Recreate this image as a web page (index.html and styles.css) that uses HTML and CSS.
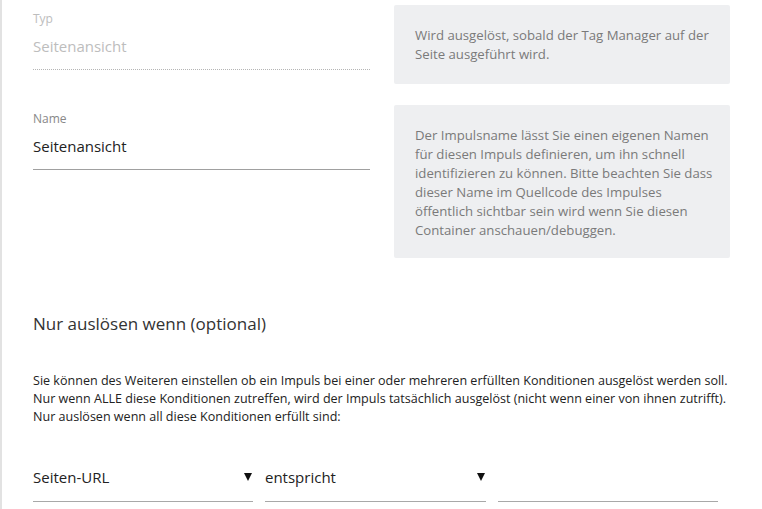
FILE: index.html
```html
<!DOCTYPE html>
<html lang="de">
<head>
  <meta charset="UTF-8" />
  <meta name="viewport" content="width=device-width, initial-scale=1.0"/>
  <title>Impuls bearbeiten</title>
  <link rel="stylesheet" href="styles.css">
</head>
<body>
  <main class="editor">
    <section class="field-row">
      <div class="field field-readonly">
        <label class="field-label">Typ</label>
        <div class="field-value">Seitenansicht</div>
      </div>
      <div class="hint-box">
        Wird ausgelöst, sobald der Tag Manager auf der Seite ausgeführt wird.
      </div>
    </section>

    <section class="field-row">
      <div class="field">
        <label class="field-label" for="name">Name</label>
        <input class="field-input" id="name" type="text" value="Seitenansicht">
      </div>
      <div class="hint-box hint-long">
        Der Impulsname lässt Sie einen eigenen Namen für diesen Impuls definieren, um ihn schnell identifizieren zu können. Bitte beachten Sie dass dieser Name im Quellcode des Impulses öffentlich sichtbar sein wird wenn Sie diesen Container anschauen/debuggen.
      </div>
    </section>

    <section class="conditions">
      <h2>Nur auslösen wenn (optional)</h2>
      <p>
        Sie können des Weiteren einstellen ob ein Impuls bei einer oder mehreren erfüllten Konditionen ausgelöst werden soll.<br>
        Nur wenn ALLE diese Konditionen zutreffen, wird der Impuls tatsächlich ausgelöst (nicht wenn einer von ihnen zutrifft).<br>
        Nur auslösen wenn all diese Konditionen erfüllt sind:
      </p>

      <div class="condition-row">
        <div class="select-box">
          <span>Seiten-URL</span>
          <span class="caret"></span>
        </div>
        <div class="select-box">
          <span>entspricht</span>
          <span class="caret"></span>
        </div>
        <input class="condition-input" type="text">
      </div>
    </section>
  </main>
</body>
</html>
```

FILE: styles.css
```css
* {
  margin: 0;
  padding: 0;
  box-sizing: border-box;
}

body {
  background-color: #ffffff;
  font-family: 'Open Sans', sans-serif;
  color: #222;
}

.editor {
  min-height: 100vh;
  border-left: 2px solid #e2e2e2;
  padding: 5px 0 0 31px;
}

.field-row {
  display: grid;
  grid-template-columns: 337px 336px;
  column-gap: 24px;
  align-items: start;
  margin-bottom: 21px;
}

.field {
  padding-top: 6px;
}

.field-label {
  display: block;
  font-size: 12px;
  line-height: 16px;
  color: #888;
  margin-bottom: 9px;
}

.field-value,
.field-input {
  display: block;
  width: 100%;
  font-family: 'Open Sans', sans-serif;
  font-size: 15px;
  line-height: 20px;
  padding-bottom: 13px;
  color: #222;
  border: none;
  border-bottom: 1px solid #a0a0a0;
  outline: none;
  background: transparent;
}

.field-readonly .field-label,
.field-readonly .field-value {
  color: #bdbdbd;
}

.field-readonly .field-value {
  border-bottom: 1px dotted #b5b5b5;
}

.hint-box {
  background-color: #eeeff1;
  border-radius: 2px;
  padding: 21px 14px 20px 21px;
  font-size: 13.2px;
  line-height: 19px;
  color: #7a7a7a;
}

.hint-long {
  padding-bottom: 18px;
}

.conditions {
  padding-top: 33px;
}

.conditions h2 {
  font-size: 17px;
  font-weight: 400;
  line-height: 24px;
  color: #333;
  margin-bottom: 36px;
}

.conditions p {
  font-size: 12.55px;
  line-height: 18px;
  color: #222;
  margin-bottom: 41px;
}

.condition-row {
  display: grid;
  grid-template-columns: 220px 221px 220px;
  column-gap: 12px;
}

.select-box {
  display: flex;
  justify-content: space-between;
  align-items: center;
  font-size: 15px;
  line-height: 20px;
  padding-bottom: 14px;
  border-bottom: 1px solid #a8a8a8;
}

.caret {
  width: 0;
  height: 0;
  margin-right: 1px;
  border-left: 4px solid transparent;
  border-right: 4px solid transparent;
  border-top: 8px solid #111;
}

.condition-input {
  border: none;
  border-bottom: 1px solid #a8a8a8;
  outline: none;
  background: transparent;
  height: 35px;
}
```
